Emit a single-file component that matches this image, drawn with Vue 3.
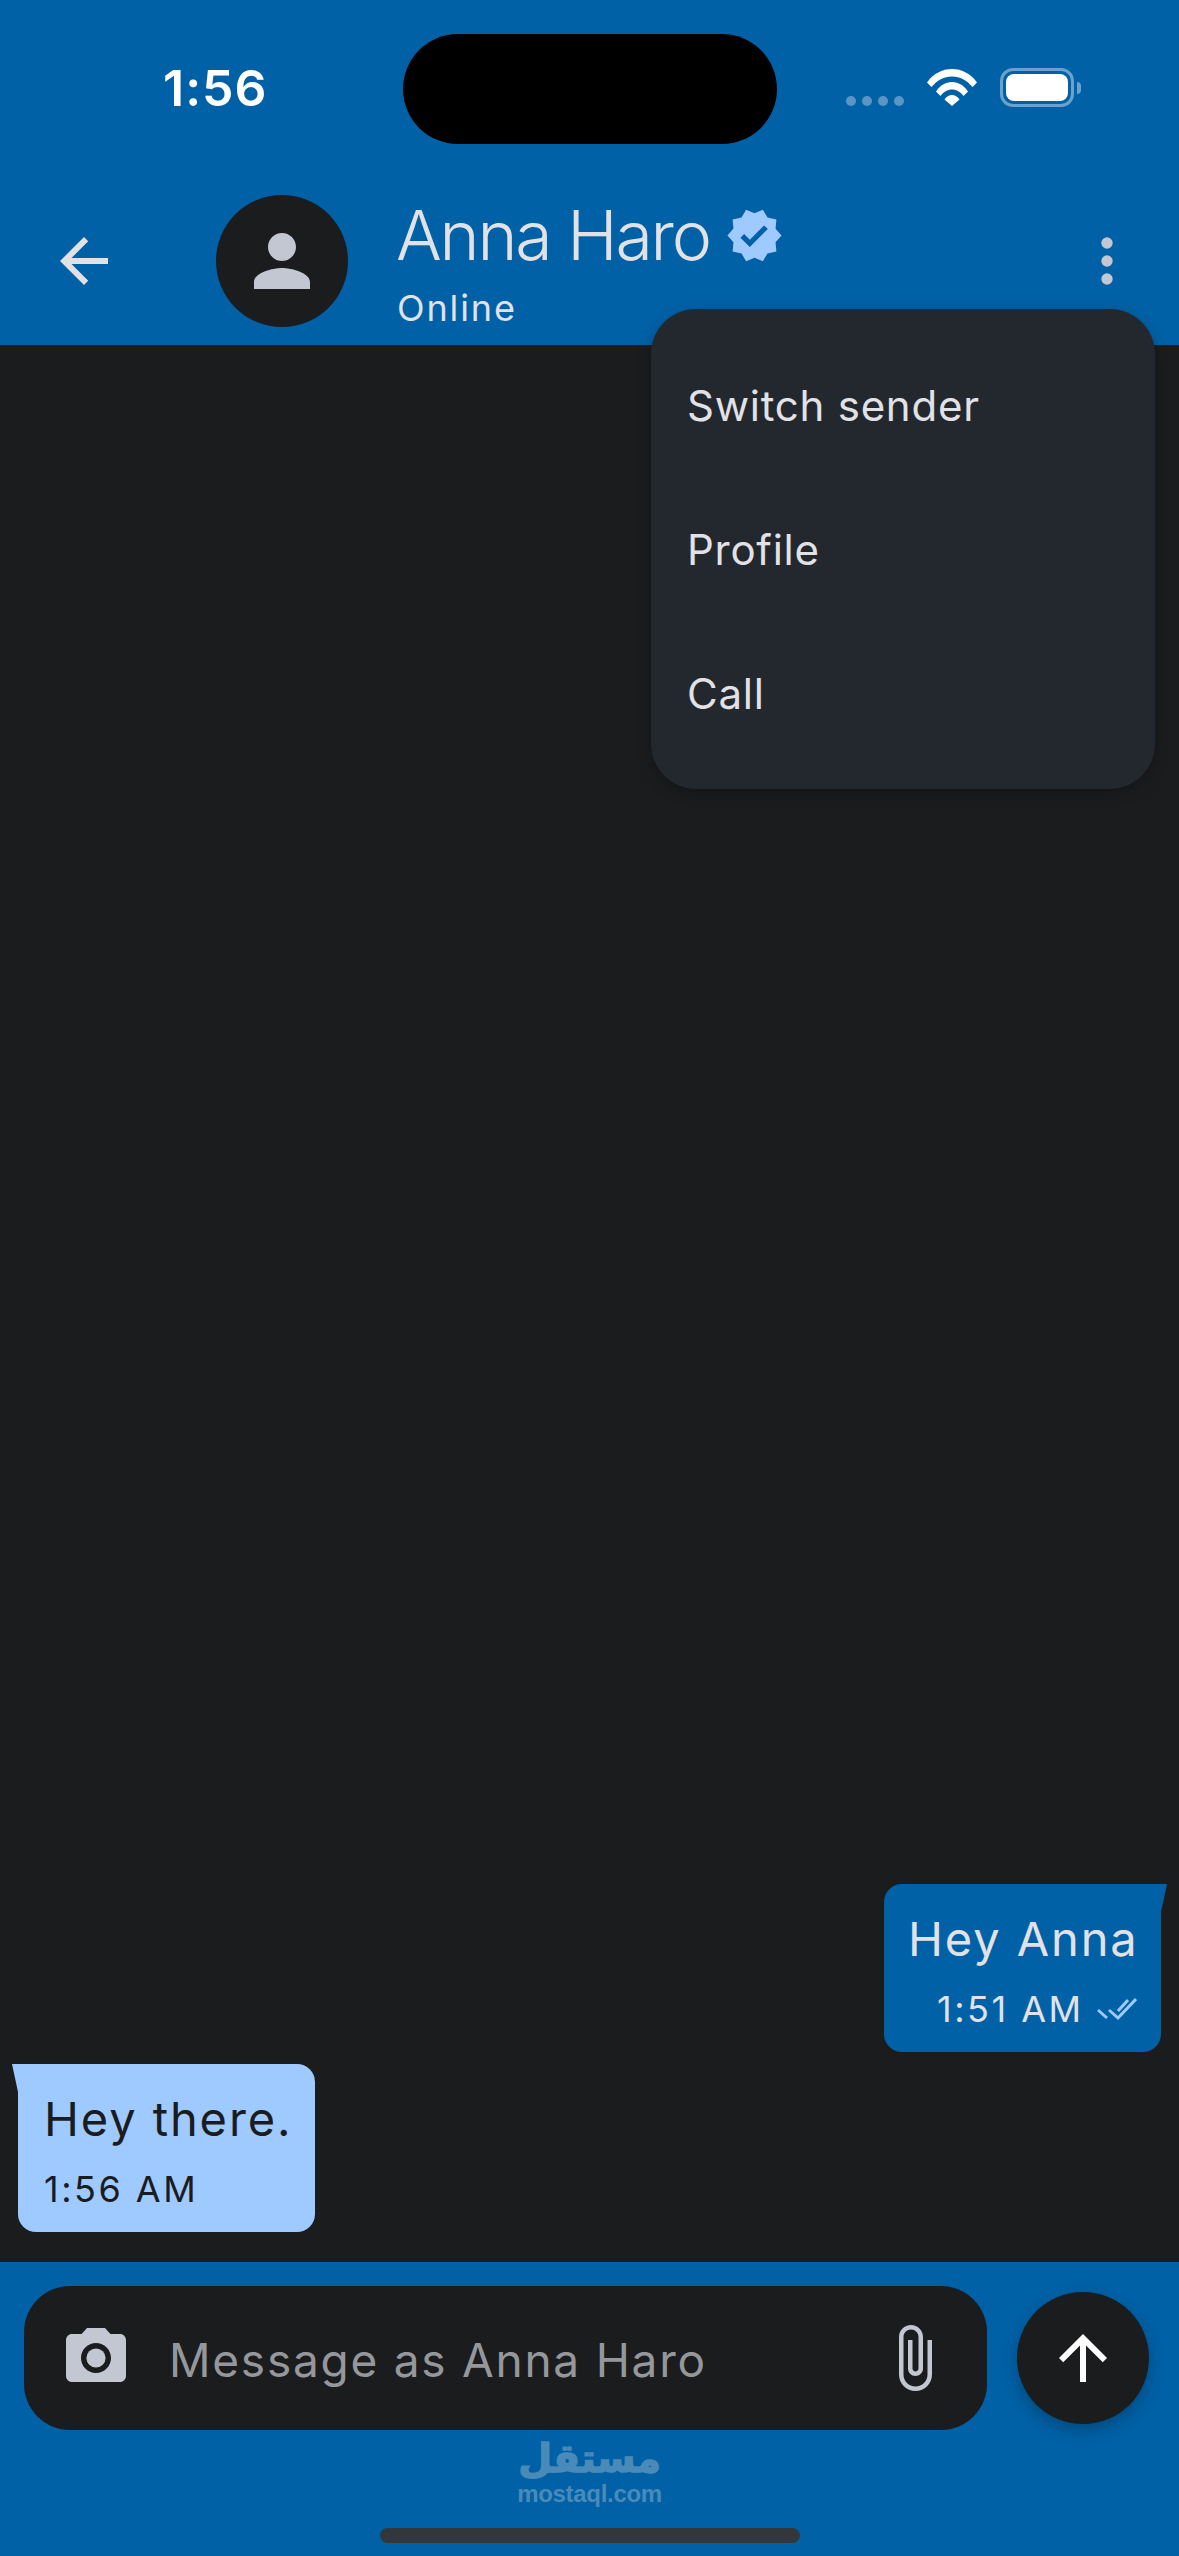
<script setup>
const menuItems = ['Switch sender', 'Profile', 'Call'];
</script>

<template>
  <div class="screen">
    <header class="top">
      <div class="status">
        <span class="time">1:56</span>
        <div class="island"></div>
        <div class="status-icons">
          <div class="signal">
            <i></i><i></i><i></i><i></i>
          </div>
          <svg class="wifi" viewBox="0 0 50 37">
            <path d="M0 13.500C6.500 4.500 15 0 25 0s18.500 4.500 25 13.500l-4.500 4.500C40 11.500 33 7.500 25 7.500S10 11.500 4.500 18z" fill="#fff" />
            <path d="M9 22.500C13 16.500 18.500 13 25 13s12 3.500 16 9.500l-4.500 4.500C33.500 23 29.500 20.500 25 20.500S16.500 23 13.500 27z" fill="#fff" />
            <path d="M17.500 30.500C19.500 27.500 22 26 25 26s5.500 1.500 7.500 4.500L25 37z" fill="#fff" />
          </svg>
          <div class="battery">
            <div class="battery-body"><div class="battery-fill"></div></div>
            <div class="battery-nub"></div>
          </div>
        </div>
      </div>
      <div class="appbar">
        <svg class="icon back" viewBox="0 0 24 24">
          <path d="M20 11H7.830l5.590-5.590L12 4l-8 8 8 8 1.410-1.410L7.830 13H20v-2z" />
        </svg>
        <div class="avatar">
          <svg class="icon" viewBox="0 0 24 24">
            <path d="M12 12c2.210 0 4-1.790 4-4s-1.790-4-4-4-4 1.790-4 4 1.790 4 4 4zm0 2c-2.670 0-8 1.340-8 4v2h16v-2c0-2.660-5.330-4-8-4z" />
          </svg>
        </div>
        <div class="who">
          <div class="name-row">
            <span class="name">Anna Haro</span>
            <svg class="verified" viewBox="0 0 24 24">
              <path d="M23 12l-2.440-2.790.340-3.690-3.610-.820-1.890-3.200L12 2.960 8.600 1.500 6.710 4.690 3.100 5.500l.340 3.700L1 12l2.440 2.790-.340 3.700 3.610.820L8.600 22.500l3.400-1.470 3.400 1.460 1.890-3.190 3.610-.820-.340-3.690L23 12zm-12.910 4.720l-3.800-3.810 1.480-1.480 2.320 2.330 5.850-5.870 1.480 1.480-7.330 7.350z" />
            </svg>
          </div>
          <span class="online">Online</span>
        </div>
        <svg class="icon more" viewBox="0 0 24 24">
          <circle cx="12" cy="6" r="1.900" />
          <circle cx="12" cy="12" r="1.900" />
          <circle cx="12" cy="18" r="1.900" />
        </svg>
      </div>
    </header>

    <main class="chat">
      <div class="bubble mine">
        <div class="text">Hey Anna</div>
        <div class="meta">
          <span>1:51 AM</span>
          <svg class="checks" viewBox="0 0 40 24">
            <path d="M1 13l9 8M12 13l9 8L39 2M21 14L31 3" fill="none" stroke="#9ecaff" stroke-width="3" />
          </svg>
        </div>
      </div>
      <div class="bubble theirs">
        <div class="text">Hey there.</div>
        <div class="meta"><span>1:56 AM</span></div>
      </div>
    </main>

    <footer class="bottom">
      <div class="composer">
        <div class="field">
          <svg class="icon camera" viewBox="0 0 24 24">
            <path d="M9 2L7.170 4H4c-1.100 0-2 .9-2 2v12c0 1.100.9 2 2 2h16c1.100 0 2-.9 2-2V6c0-1.100-.9-2-2-2h-3.170L15 2H9zm3 15c-2.760 0-5-2.240-5-5s2.240-5 5-5 5 2.240 5 5-2.240 5-5 5z" />
            <circle cx="12" cy="12" r="3.200" />
          </svg>
          <span class="placeholder">Message as Anna Haro</span>
          <svg class="icon clip" viewBox="0 0 24 24">
            <path d="M16.500 6v11.500c0 2.210-1.790 4-4 4s-4-1.790-4-4V5c0-1.380 1.120-2.500 2.500-2.500s2.500 1.120 2.500 2.500v10.500c0 .55-.45 1-1 1s-1-.45-1-1V6H10v9.500c0 1.380 1.120 2.500 2.500 2.500s2.500-1.120 2.500-2.500V5c0-2.210-1.790-4-4-4S7 2.790 7 5v12.500c0 3.040 2.460 5.500 5.500 5.500s5.500-2.460 5.500-5.500V6h-1.500z" />
          </svg>
        </div>
        <button class="send">
          <svg class="icon" viewBox="0 0 24 24">
            <path d="M4 12l1.410 1.410L11 7.830V20h2V7.830l5.580 5.590L20 12l-8-8-8 8z" />
          </svg>
        </button>
      </div>
      <div class="watermark">
        <span class="wm-ar" lang="ar" dir="rtl">مستقل</span>
        <span class="wm-en">mostaql.com</span>
      </div>
      <div class="home-bar"></div>
    </footer>

    <div class="menu">
      <div v-for="item in menuItems" :key="item" class="menu-item">{{ item }}</div>
    </div>
  </div>
</template>

<style>
html, body {
  margin: 0;
  background: #1a1c1e;
}
</style>

<style scoped>
.screen {
  position: relative;
  width: 1179px;
  height: 2556px;
  display: flex;
  flex-direction: column;
  overflow: hidden;
  background: #1a1c1e;
  color: #e2e2e6;
  font-family: Inter, "Liberation Sans", sans-serif;
}
.icon {
  display: block;
  width: 72px;
  height: 72px;
  fill: #c2c7d2;
}

.top {
  background: #0061a6;
  height: 345px;
  flex: none;
}
.status {
  height: 177px;
  box-sizing: border-box;
  padding: 34px 0 0 163px;
  display: flex;
  align-items: flex-start;
}
.time {
  width: 240px;
  margin-top: 26px;
  font-size: 50px;
  line-height: 56px;
  font-weight: 600;
  letter-spacing: 1px;
  color: #fff;
}
.island {
  width: 374px;
  height: 110px;
  border-radius: 55px;
  background: #000;
}
.status-icons {
  display: flex;
  align-items: flex-start;
  margin: 34px 0 0 69px;
}
.signal {
  display: flex;
  gap: 6px;
  margin-top: 28px;
}
.signal i {
  width: 10px;
  height: 10px;
  border-radius: 50%;
  background: #5a95c6;
}
.wifi {
  display: block;
  width: 50px;
  height: 37px;
  margin: 1px 0 0 23px;
}
.battery {
  display: flex;
  align-items: center;
  margin-left: 23px;
}
.battery-body {
  width: 74px;
  height: 39px;
  box-sizing: border-box;
  padding: 3px;
  border: 3px solid #6da1cd;
  border-radius: 13px;
}
.battery-fill {
  height: 100%;
  border-radius: 8px;
  background: #fff;
}
.battery-nub {
  width: 4px;
  height: 12px;
  margin-left: 3px;
  border-radius: 0 6px 6px 0;
  background: #6da1cd;
}

.appbar {
  height: 168px;
  display: flex;
  align-items: center;
  padding: 0 36px 0 48px;
}
.back {
  fill: #e2e2e6;
}
.avatar {
  width: 132px;
  height: 132px;
  margin-left: 96px;
  border-radius: 50%;
  background: #1a1c1e;
  display: flex;
  align-items: center;
  justify-content: center;
}
.avatar .icon {
  width: 84px;
  height: 84px;
}
.who {
  margin-left: 48px;
  display: flex;
  flex-direction: column;
}
.name-row {
  display: flex;
  align-items: center;
  height: 76px;
  margin-top: 5px;
}
.name {
  font-size: 68px;
  line-height: 76px;
  font-weight: 300;
  letter-spacing: -2.200px;
}
.verified {
  display: block;
  width: 59px;
  height: 59px;
  margin-left: 15px;
  fill: #9ecaff;
}
.online {
  margin: 13px 0 0 1px;
  font-size: 36px;
  line-height: 44px;
  letter-spacing: 1.900px;
}
.more {
  margin-left: auto;
}

.chat {
  flex: 1;
  display: flex;
  flex-direction: column;
  justify-content: flex-end;
  gap: 12px;
  padding: 0 18px 30px;
}
.bubble {
  position: relative;
  box-sizing: border-box;
  height: 168px;
  padding: 27px 0 0 24px;
  border-radius: 18px;
  font-size: 47px;
}
.bubble::after {
  content: "";
  position: absolute;
  top: 0;
  width: 6px;
  height: 28px;
}
.text {
  line-height: 56px;
  letter-spacing: 1.900px;
}
.meta {
  display: flex;
  align-items: center;
  margin-top: 20px;
  font-size: 36px;
  line-height: 44px;
  letter-spacing: 2.500px;
}
.mine {
  align-self: flex-end;
  width: 277px;
  background: #0061a6;
  border-top-right-radius: 0;
}
.mine::after {
  left: 100%;
  background: #0061a6;
  clip-path: polygon(0 0, 100% 0, 0 100%);
}
.mine .meta {
  padding-left: 29px;
}
.checks {
  display: block;
  width: 40px;
  height: 24px;
  margin-left: 13px;
}
.theirs {
  align-self: flex-start;
  width: 297px;
  padding-left: 26px;
  background: #9ecaff;
  color: #1a1c1e;
  border-top-left-radius: 0;
}
.theirs::after {
  right: 100%;
  background: #9ecaff;
  clip-path: polygon(0 0, 100% 0, 100% 100%);
}

.bottom {
  flex: none;
  height: 294px;
  box-sizing: border-box;
  padding-top: 24px;
  background: #0061a6;
  display: flex;
  flex-direction: column;
  align-items: center;
}
.composer {
  width: 100%;
  display: flex;
  align-items: center;
  box-sizing: border-box;
  padding: 0 30px 0 24px;
}
.field {
  flex: 1;
  height: 144px;
  display: flex;
  align-items: center;
  padding: 0 36px;
  border-radius: 46px;
  background: #1a1c1e;
}
.placeholder {
  margin-left: 37px;
  padding-top: 3px;
  font-size: 46px;
  letter-spacing: 1.750px;
  color: #96979a;
}
.clip {
  margin-left: auto;
  margin-right: 1px;
}
.send {
  width: 132px;
  height: 132px;
  margin-left: 30px;
  padding: 0;
  border: none;
  border-radius: 50%;
  background: #1a1c1e;
  box-shadow: 0 6px 16px rgba(0, 0, 0, 0.25);
  display: flex;
  align-items: center;
  justify-content: center;
}
.send .icon {
  fill: #fff;
}
.watermark {
  height: 77px;
  margin-top: 6px;
  display: flex;
  flex-direction: column;
  align-items: center;
  color: #4a8ab9;
}
.wm-ar {
  display: block;
  font-family: "DejaVu Sans", sans-serif;
  font-size: 39px;
  line-height: 46px;
  font-weight: 700;
  -webkit-text-stroke: 1.500px #4a8ab9;
}
.wm-en {
  font-family: "Liberation Sans", sans-serif;
  font-size: 24px;
  line-height: 24px;
  letter-spacing: -0.300px;
  font-weight: 700;
}
.home-bar {
  width: 420px;
  height: 15px;
  margin-top: 15px;
  border-radius: 8px;
  background: #33373c;
}

.menu {
  position: absolute;
  top: 309px;
  left: 651px;
  width: 504px;
  box-sizing: border-box;
  padding: 24px 0;
  border-radius: 45px;
  background: #23282f;
  box-shadow: 0 4px 14px rgba(0, 0, 0, 0.25);
}
.menu-item {
  height: 144px;
  display: flex;
  align-items: center;
  padding-left: 36px;
  font-size: 42px;
  letter-spacing: 0.750px;
}
</style>
